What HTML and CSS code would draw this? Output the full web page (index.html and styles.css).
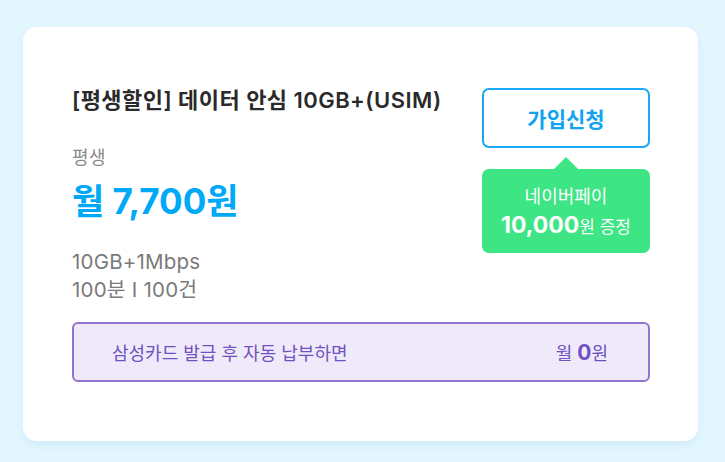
FILE: index.html
```html
<!DOCTYPE html>
<html lang="ko">
<head>
<meta charset="utf-8">
<link rel="stylesheet" href="styles.css">
</head>
<body>
<div class="page">
  <div class="card">
    <div class="top">
      <div class="info">
        <h1 class="title">[평생할인] 데이터 안심 10GB+(USIM)</h1>
        <div class="period">평생</div>
        <div class="price">월 7,700원</div>
        <div class="specs">
          <div>10GB+1Mbps</div>
          <div>100분 I 100건</div>
        </div>
      </div>
      <div class="side">
        <button class="join">가입신청</button>
        <div class="tip">
          <div class="tip-line1">네이버페이</div>
          <div class="tip-line2"><b>10,000</b>원 증정</div>
        </div>
      </div>
    </div>
    <div class="promo">
      <span class="promo-text">삼성카드 발급 후 자동 납부하면</span>
      <span class="promo-price">월 <b>0</b>원</span>
    </div>
  </div>
</div>
</body>
</html>
```

FILE: styles.css
```css
* { box-sizing: border-box; }
html, body { margin: 0; padding: 0; }
body {
  background: #e3f6fe;
  font-family: "Inter", "Noto Sans CJK KR", sans-serif;
  width: 725px;
  height: 462px;
  overflow: hidden;
}
.page {
  padding: 27px 27px 0 23px;
}
.card {
  width: 675px;
  height: 414px;
  background: #ffffff;
  border-radius: 14px;
  box-shadow: 0 4px 10px rgba(60, 160, 220, 0.10);
  padding: 61px 48px 0 49px;
}
.top {
  display: flex;
  justify-content: space-between;
  align-items: flex-start;
}
.info {
  display: flex;
  flex-direction: column;
}
.title {
  margin: 0;
  font-size: 22px;
  line-height: 24px;
  font-weight: 600;
  color: #2a2a2a;
  letter-spacing: 0.45px;
}
.period {
  margin-top: 35px;
  font-size: 18px;
  line-height: 22px;
  color: #8a8a8a;
  letter-spacing: 0.5px;
}
.price {
  margin-top: 11px;
  font-size: 35px;
  line-height: 42px;
  font-weight: 700;
  color: #00a9f7;
  letter-spacing: 0;
}
.specs {
  margin-top: 26px;
  font-size: 20.5px;
  line-height: 28px;
  color: #7a7a7a;
  letter-spacing: 0.2px;
}
.side {
  width: 168px;
  display: flex;
  flex-direction: column;
}
.join {
  height: 60px;
  border: 2px solid #17a9f6;
  border-radius: 7px;
  background: #fff;
  color: #10a3f0;
  font-family: inherit;
  font-size: 21px;
  font-weight: 700;
  padding: 0;
}
.tip {
  position: relative;
  margin-top: 21px;
  height: 84px;
  background: #3ee584;
  border-radius: 7px;
  color: #fff;
  text-align: center;
  padding-top: 16px;
}
.tip::before {
  content: "";
  position: absolute;
  left: 72px;
  top: -12px;
  border-left: 12px solid transparent;
  border-right: 12px solid transparent;
  border-bottom: 12px solid #3ee584;
}
.tip-line1 {
  font-size: 18px;
  line-height: 24px;
}
.tip-line2 {
  font-size: 17px;
  line-height: 32px;
}
.tip-line2 b {
  font-size: 23px;
  font-weight: 700;
}
.promo {
  margin-top: 18px;
  height: 60px;
  border: 2px solid #9173cd;
  border-radius: 6px;
  background: #efeaf9;
  display: flex;
  justify-content: space-between;
  align-items: center;
  padding: 0 40px 0 38px;
  color: #7150c2;
  font-size: 18px;
}
.promo-price b {
  font-size: 21px;
  font-weight: 700;
}
```
